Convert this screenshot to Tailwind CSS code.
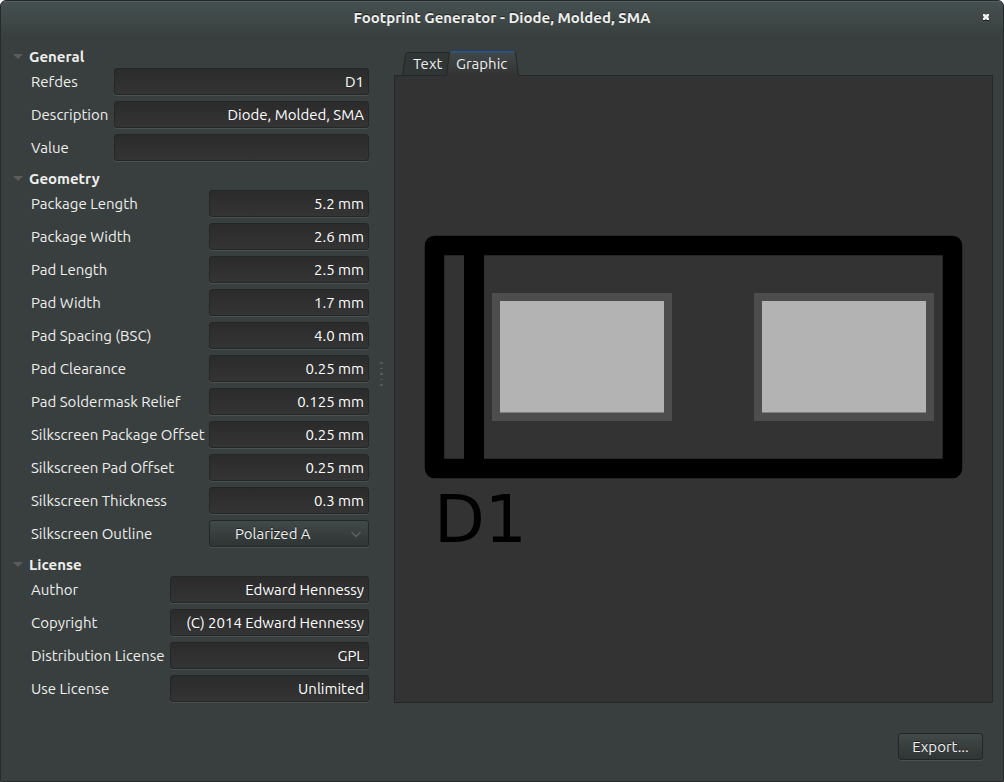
<!DOCTYPE html>
<html lang="en">
<head>
<meta charset="utf-8">
<title>Footprint Generator - Diode, Molded, SMA</title>
<script src="https://cdn.jsdelivr.net/npm/@tailwindcss/browser@4"></script>
</head>
<body class="bg-white text-[#eeeeec] font-['Ubuntu','Noto_Sans',sans-serif] text-[15px]">
<div class="min-h-screen flex flex-col rounded-t-md border border-[#262a2a] bg-[#393f3f] overflow-hidden">
  <header class="h-9 shrink-0 grid grid-cols-[40px_1fr_40px] items-center border-t border-[#566060] bg-linear-to-b from-[#465050] to-[#393f3f]">
    <h1 class="col-start-2 text-center leading-5 pb-1 font-bold whitespace-nowrap [text-shadow:0_-1px_#1c2020]">Footprint Generator - Diode, Molded, SMA</h1>
    <button type="button" aria-label="Close" class="justify-self-end mr-3.5 pb-1">
      <svg class="block" width="6" height="7" viewBox="0 0 6 7"><path d="M0 1h6v6H4L3 6 2 7H0z" fill="#1c2020"/><path d="M0 0h2l1 1 1-1h2v2L5 3l1 1v2H4L3 5 2 6H0V4l1-1-1-1z" fill="#eeeeec"/></svg>
    </button>
  </header>

  <main class="flex-1 flex pt-2 pr-2.5">
    <form class="w-[368px] shrink-0 pt-px pl-3 flex flex-col gap-1.5 whitespace-nowrap
      [&_h2]:h-[22px] [&_h2]:flex [&_h2]:items-center [&_h2]:gap-1.5 [&_h2]:font-bold
      [&_label]:leading-5
      [&_input]:w-full [&_input]:min-w-0 [&_input]:h-[27px] [&_input]:mb-px [&_input]:px-1 [&_input]:rounded-[3px] [&_input]:border [&_input]:border-[#222727] [&_input]:bg-linear-to-b [&_input]:from-[#2b2b2b] [&_input]:to-[#343434] [&_input]:text-right [&_input]:text-white [&_input]:shadow-[0_1px_#4b5151]">
      <section>
        <h2><svg width="10" height="6" viewBox="0 0 10 6"><path d="M0 0h10L5 5z" fill="#5c5c5c"/></svg>General</h2>
        <div class="pl-[18px] grid grid-cols-[78px_1fr] items-center gap-[5px]">
          <label for="refdes">Refdes</label><input id="refdes" value="D1">
          <label for="desc">Description</label><input id="desc" value="Diode, Molded, SMA">
          <label for="value">Value</label><input id="value" value="">
        </div>
      </section>
      <section>
        <h2><svg width="10" height="6" viewBox="0 0 10 6"><path d="M0 0h10L5 5z" fill="#5c5c5c"/></svg>Geometry</h2>
        <div class="pl-[18px] grid grid-cols-[173px_1fr] items-center gap-[5px]">
          <label for="pkglen">Package Length</label><input id="pkglen" value="5.2 mm">
          <label for="pkgwid">Package Width</label><input id="pkgwid" value="2.6 mm">
          <label for="padlen">Pad Length</label><input id="padlen" value="2.5 mm">
          <label for="padwid">Pad Width</label><input id="padwid" value="1.7 mm">
          <label for="padspc">Pad Spacing (BSC)</label><input id="padspc" value="4.0 mm">
          <label for="padclr">Pad Clearance</label><input id="padclr" value="0.25 mm">
          <label for="padmask">Pad Soldermask Relief</label><input id="padmask" value="0.125 mm">
          <label for="silkpkg">Silkscreen Package Offset</label><input id="silkpkg" value="0.25 mm">
          <label for="silkpad">Silkscreen Pad Offset</label><input id="silkpad" value="0.25 mm">
          <label for="silkthk">Silkscreen Thickness</label><input id="silkthk" value="0.3 mm">
          <label for="outline">Silkscreen Outline</label>
          <div class="relative h-7">
            <select id="outline" class="block appearance-none w-full h-[27px] pt-px pl-[25px] pr-6 rounded-[3px] border border-[#222727] bg-linear-to-b from-[#424949] to-[#2f3434] shadow-[0_1px_#4b5151] [text-shadow:0_-1px_#1c2020]">
              <option>Polarized A</option>
            </select>
            <svg class="absolute right-2 top-[11px] pointer-events-none" width="10" height="7" viewBox="0 0 10 7"><path d="M.5 1 5 5.500 9.500 1" fill="none" stroke="#5e6262" stroke-width="1.500"/></svg>
          </div>
        </div>
      </section>
      <section>
        <h2><svg width="10" height="6" viewBox="0 0 10 6"><path d="M0 0h10L5 5z" fill="#5c5c5c"/></svg>License</h2>
        <div class="pl-[18px] grid grid-cols-[134px_1fr] items-center gap-[5px]">
          <label for="author">Author</label><input id="author" value="Edward Hennessy">
          <label for="copyright">Copyright</label><input id="copyright" value="(C) 2014 Edward Hennessy">
          <label for="distlic">Distribution License</label><input id="distlic" value="GPL">
          <label for="uselic">Use License</label><input id="uselic" value="Unlimited">
        </div>
      </section>
    </form>

    <div class="w-[25px] shrink-0 flex items-center justify-center" role="separator">
      <svg width="3" height="25" viewBox="0 0 3 25" fill="#555b5b"><path d="M0 0h3v2H0zM0 6h3v1H0zM0 11h3v2H0zM0 17h3v1H0zM0 22h3v2H0z"/></svg>
    </div>

    <section class="flex-1 min-w-0 flex flex-col">
      <div role="tablist" class="relative z-10 h-[30px] shrink-0 flex items-end pl-2">
        <button type="button" role="tab" aria-selected="false" class="relative w-11 h-[23px]">
          <svg class="absolute left-0 top-0" width="48" height="23" viewBox="0 0 48 23"><path d="M.5 23 3.500 2.500Q4 .5 6 .5h42V23" fill="#303535" stroke="#232828"/></svg>
          <span class="relative block pl-[11px] text-left leading-[23px]">Text</span>
        </button>
        <button type="button" role="tab" aria-selected="true" class="relative w-[73px] h-[26px] -mb-px">
          <svg class="absolute left-0 top-0" width="73" height="26" viewBox="0 0 73 26">
            <defs><linearGradient id="tab" x2="0" y2="1"><stop offset="0" stop-color="#424949"/><stop offset="1" stop-color="#333333"/></linearGradient></defs>
            <path d="M0 26 .5 25.500 3.500 2.500Q4 .5 6 .5h61q2 0 2.500 2L72.500 25.500 73 26" fill="url(#tab)" stroke="#232828"/>
            <path d="M5 0.500h63q1 1 1 2H4Q4 1.500 5 .5z" fill="#2d5387"/>
          </svg>
          <span class="relative block pl-2.5 text-left leading-[26px] pt-px">Graphic</span>
        </button>
      </div>
      <div role="tabpanel" class="flex-1 border border-[#232828] bg-[#333333] flex">
        <svg class="w-full" viewBox="0 0 597 626" role="img" aria-label="Footprint preview">
          <rect x="39.500" y="169.500" width="518" height="223" fill="none" stroke="#000" stroke-width="19.500" stroke-linejoin="round"/>
          <rect x="69" y="160" width="20" height="241.500"/>
          <g fill="#4d4d4d"><rect x="97" y="217" width="180" height="128"/><rect x="359" y="217" width="180" height="128"/></g>
          <g fill="#b3b3b3"><rect x="105" y="225" width="164" height="111.500"/><rect x="367" y="225" width="164" height="111.500"/></g>
          <text x="39" y="466" font-family="DejaVu Sans, sans-serif" font-size="66">D1</text>
        </svg>
      </div>
    </section>
  </main>

  <footer class="flex justify-end pt-[30px] pb-[21px] pr-5">
    <button type="button" class="w-[85px] h-[27px] pt-px rounded-[3px] border border-[#222727] bg-linear-to-b from-[#424949] to-[#2f3434] shadow-[0_1px_#4b5151] [text-shadow:0_-1px_#1c2020]">Export...</button>
  </footer>
</div>
</body>
</html>
